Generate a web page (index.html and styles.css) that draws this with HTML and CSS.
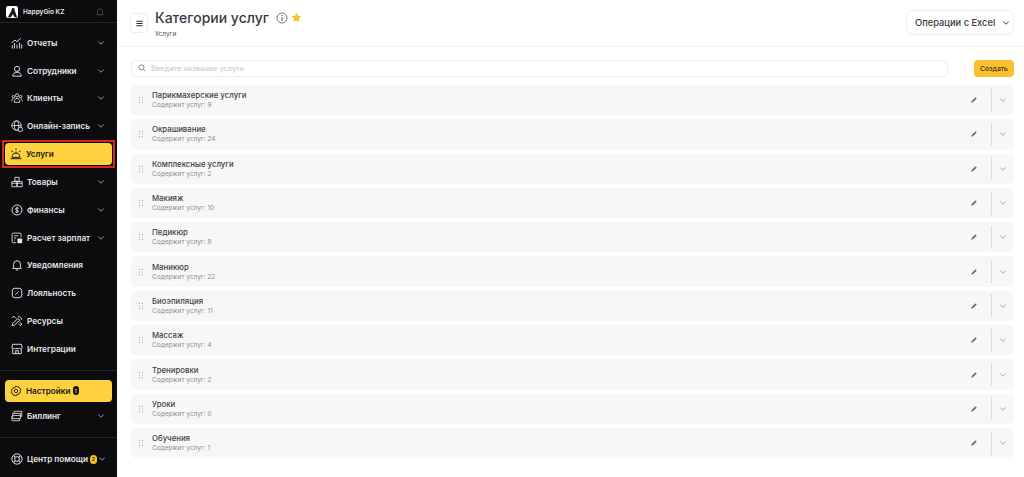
FILE: index.html
```html
<!DOCTYPE html>
<html lang="ru">
<head>
<meta charset="utf-8">
<title>Категории услуг</title>
<link rel="stylesheet" href="styles.css">
</head>
<body>
<svg class="defs" width="0" height="0" aria-hidden="true">
  <symbol id="chev" viewBox="0 0 12 12"><path d="M3 4.5 6 7.5 9 4.5" fill="none" stroke="currentColor" stroke-width="1.2" stroke-linecap="round" stroke-linejoin="round"/></symbol>
  <symbol id="pen" viewBox="0 0 12 12"><path d="M2 10 2.6 7.6 7.6 2.6a1 1 0 0 1 1.5 0l.3.3a1 1 0 0 1 0 1.5L4.4 9.4Z" fill="currentColor"/></symbol>
  <symbol id="grip" viewBox="0 0 8 10"><g fill="currentColor"><circle cx="2" cy="1.5" r=".8"/><circle cx="6" cy="1.5" r=".8"/><circle cx="2" cy="5" r=".8"/><circle cx="6" cy="5" r=".8"/><circle cx="2" cy="8.5" r=".8"/><circle cx="6" cy="8.5" r=".8"/></g></symbol>
</svg>
<div class="app">
  <aside class="sidebar">
    <div class="brand">
      <span class="logo"><svg viewBox="0 0 14 14" width="11" height="11"><path d="M1 13 5.5 5 6.5 1.5 9 1l1 4 3 8H9.5L7.5 9 5 13Z" fill="#15151a"/></svg></span>
      <span class="brand-name">HappyGio KZ</span>
      <svg class="bell-top" viewBox="0 0 12 12" width="10" height="10"><path d="M3 8.5V5.2a3 3 0 0 1 6 0v3.3l1 .7H2ZM5 10.4h2" fill="none" stroke="currentColor" stroke-width="1"/></svg>
    </div>
    <nav class="nav nav-main">
      <a class="item"><svg class="ico" viewBox="0 0 14 14"><path d="M1.5 13V10M4 13V7.5M7 13V9.5M10 13V7M12.5 13V9M1.5 6.5 4.5 3.5 7 5.5 11 1.8" fill="none" stroke="currentColor" stroke-width="1.1" stroke-linecap="round"/></svg><span class="label">Отчеты</span><svg class="chev"><use href="#chev"/></svg></a>
      <a class="item"><svg class="ico" viewBox="0 0 14 14"><circle cx="7" cy="4.5" r="3" fill="none" stroke="currentColor" stroke-width="1.1"/><path d="M2 13c.3-3 2-4.5 5-4.5s4.700 1.500 5 4.500Z" fill="none" stroke="currentColor" stroke-width="1.1"/></svg><span class="label">Сотрудники</span><svg class="chev"><use href="#chev"/></svg></a>
      <a class="item"><svg class="ico" viewBox="0 0 14 14"><g fill="none" stroke="currentColor" stroke-width="1"><circle cx="7" cy="4" r="1.900"/><circle cx="2.800" cy="5.500" r="1.400"/><circle cx="11.200" cy="5.500" r="1.400"/><path d="M3.800 12c0-3 1.200-4.500 3.200-4.500s3.200 1.500 3.200 4.500ZM.8 11c0-2 .7-3 2.200-3M13.200 11c0-2-.7-3-2.200-3"/></g></svg><span class="label">Клиенты</span><svg class="chev"><use href="#chev"/></svg></a>
      <a class="item"><svg class="ico" viewBox="0 0 14 14"><g fill="none" stroke="currentColor" stroke-width="1"><circle cx="6.500" cy="6.500" r="5.500"/><ellipse cx="6.500" cy="6.500" rx="2.500" ry="5.500"/><path d="M1 6.500h11"/></g><circle cx="11" cy="11" r="2.600" fill="#0c0c0f" stroke="currentColor"/></svg><span class="label">Онлайн-запись</span><svg class="chev"><use href="#chev"/></svg></a>
      <div class="focus"><a class="item active"><svg class="ico" viewBox="0 0 14 14"><path d="M2.500 10.500a4.500 4.500 0 0 1 9 0ZM1 12.500h12M7 6V4.500M2 3.500l1.200 1M12 3.500l-1.200 1M7 1v1" fill="none" stroke="currentColor" stroke-width="1.100" stroke-linecap="round"/></svg><span class="label">Услуги</span></a></div>
      <a class="item"><svg class="ico" viewBox="0 0 14 14"><path d="M4.500 1.500h5v4.500h-5ZM1 6.500h6v6H1ZM7 6.500h6v6H7ZM1 8.500h12" fill="none" stroke="currentColor" stroke-width="1"/></svg><span class="label">Товары</span><svg class="chev"><use href="#chev"/></svg></a>
      <a class="item"><svg class="ico" viewBox="0 0 14 14"><circle cx="7" cy="7" r="5.800" fill="none" stroke="currentColor" stroke-width="1.100"/><path d="M8.800 5.200C8.300 4.300 5.200 4.200 5.200 5.800S8.900 7.200 8.900 8.600 5.700 9.900 5 9M7 3.500v7" fill="none" stroke="currentColor"/></svg><span class="label">Финансы</span><svg class="chev"><use href="#chev"/></svg></a>
      <a class="item"><svg class="ico" viewBox="0 0 14 14"><path d="M6 12.500H2.500a1.200 1.200 0 0 1-1.200-1.200V2.500a1.200 1.200 0 0 1 1.200-1.200h8a1.200 1.200 0 0 1 1.200 1.200V6M3.500 4.500h5M3.500 7h2.500M3.500 9.500h1" fill="none" stroke="currentColor" stroke-width="1"/><rect x="7.500" y="7.500" width="5.500" height="5.500" rx="1" fill="currentColor"/></svg><span class="label">Расчет зарплат</span><svg class="chev"><use href="#chev"/></svg></a>
      <a class="item"><svg class="ico" viewBox="0 0 14 14"><path d="M3 10V6a4 4 0 0 1 8 0v4l1 1H2ZM5.500 12.800h3" fill="none" stroke="currentColor" stroke-width="1.100" stroke-linejoin="round"/></svg><span class="label">Уведомления</span></a>
      <a class="item"><svg class="ico" viewBox="0 0 14 14"><rect x="1.500" y="1.500" width="11" height="11" rx="3" fill="none" stroke="currentColor" stroke-width="1.100"/><path d="M5 9l4-4M5 5h.3M8.800 9h.3" fill="none" stroke="currentColor"/></svg><span class="label">Лояльность</span></a>
      <a class="item"><svg class="ico" viewBox="0 0 14 14"><path d="M1.500 12.500 2 10l6-6 2 2-6 6ZM8 2.500l1.500-1 3 3-1 1.500M1.500 3l2-1.500 2.500 2.500M10 8l2.500 2.500-1.500 2-2.500-2.500" fill="none" stroke="currentColor" stroke-width="1.100"/></svg><span class="label">Ресурсы</span></a>
      <a class="item"><svg class="ico" viewBox="0 0 14 14"><path d="M2 1.500h10l1 4a1.700 1.700 0 0 1-3 .6 2 2 0 0 1-3 0 2 2 0 0 1-3 0 1.700 1.700 0 0 1-3-.6ZM2 7v5.500h10V7M5.500 12.500V9h3v3.500" fill="none" stroke="currentColor" stroke-width="1.100"/></svg><span class="label">Интеграции</span></a>
    </nav>
    <nav class="nav nav-settings">
      <a class="item active"><svg class="ico" viewBox="0 0 14 14"><path d="M7 1l1.300 1.300 1.900-.3.600 1.800 1.700.9-.6 1.800.6 1.800-1.700.9-.6 1.800-1.900-.3L7 13l-1.300-1.300-1.900.3-.6-1.800-1.700-.9.600-1.800-.6-1.800 1.700-.9.600-1.800 1.900.3Z" fill="none" stroke="currentColor" stroke-width="1"/><circle cx="7" cy="7" r="2" fill="none" stroke="currentColor"/></svg><span class="label">Настройки</span><span class="badge dark">1</span></a>
      <a class="item"><svg class="ico" viewBox="0 0 14 14"><path d="M3.500 4V2.500a1 1 0 0 1 1-1h8v6H11M2 4h9v6H2ZM2 6.500h9M1 7v4.500a1 1 0 0 0 1 1h8V10" fill="none" stroke="currentColor" stroke-width="1"/></svg><span class="label">Биллинг</span><svg class="chev"><use href="#chev"/></svg></a>
    </nav>
    <nav class="nav nav-help">
      <a class="item"><svg class="ico" viewBox="0 0 14 14"><circle cx="7" cy="7" r="6" fill="none" stroke="currentColor" stroke-width="1.100"/><circle cx="7" cy="7" r="2.700" fill="none" stroke="currentColor" stroke-width="1.100"/><path d="M3 3l2 2M11 3 9 5M3 11l2-2M11 11 9 9" stroke="currentColor" stroke-width="1.300"/></svg><span class="label">Центр помощи</span><span class="badge gold">2</span><svg class="chev"><use href="#chev"/></svg></a>
    </nav>
  </aside>
  <main class="main">
    <header class="header">
      <button class="menu-btn" aria-label="Меню"><svg viewBox="0 0 10 10" width="9" height="9"><path d="M1.500 2.500h7M1.500 5h7M1.500 7.500h7" stroke="#2c2c30" stroke-width="1.200"/></svg></button>
      <div class="titles">
        <div class="title-row">
          <h1 class="title">Категории услуг</h1>
          <svg class="info" viewBox="0 0 12 12" width="12" height="12"><circle cx="6" cy="6" r="5" fill="none" stroke="#77777c"/><path d="M6 5.200V9M6 3v1.100" stroke="#55555a" stroke-width="1.100"/></svg>
          <svg class="star" viewBox="0 0 12 12" width="11" height="11"><path d="M6 .8 7.600 4.200l3.700.5-2.700 2.600.7 3.700L6 9.200 2.700 11l.7-3.700L.7 4.700l3.700-.5Z" fill="#f9c22d"/></svg>
        </div>
        <div class="crumb">Услуги</div>
      </div>
      <button class="excel">Операции с Excel<svg class="chev-dark"><use href="#chev"/></svg></button>
    </header>
    <section class="content">
      <div class="toolbar">
        <div class="search">
          <svg viewBox="0 0 10 10" width="8" height="8"><circle cx="4.300" cy="4.300" r="3.200" fill="none" stroke="#77777c" stroke-width="1.100"/><path d="M6.800 6.800 9 9" stroke="#77777c" stroke-width="1.100"/></svg>
          <span class="placeholder">Введите название услуги</span>
        </div>
        <button class="create">Создать</button>
      </div>
      <ul class="rows">
        <li class="row"><svg class="grip"><use href="#grip"/></svg><div class="row-text"><div class="row-name">Парикмахерские услуги</div><div class="row-sub">Содержит услуг: 9</div></div><svg class="pen"><use href="#pen"/></svg><span class="sep"></span><svg class="row-chev"><use href="#chev"/></svg></li>
        <li class="row"><svg class="grip"><use href="#grip"/></svg><div class="row-text"><div class="row-name">Окрашивание</div><div class="row-sub">Содержит услуг: 24</div></div><svg class="pen"><use href="#pen"/></svg><span class="sep"></span><svg class="row-chev"><use href="#chev"/></svg></li>
        <li class="row"><svg class="grip"><use href="#grip"/></svg><div class="row-text"><div class="row-name">Комплексные услуги</div><div class="row-sub">Содержит услуг: 2</div></div><svg class="pen"><use href="#pen"/></svg><span class="sep"></span><svg class="row-chev"><use href="#chev"/></svg></li>
        <li class="row"><svg class="grip"><use href="#grip"/></svg><div class="row-text"><div class="row-name">Макияж</div><div class="row-sub">Содержит услуг: 10</div></div><svg class="pen"><use href="#pen"/></svg><span class="sep"></span><svg class="row-chev"><use href="#chev"/></svg></li>
        <li class="row"><svg class="grip"><use href="#grip"/></svg><div class="row-text"><div class="row-name">Педикюр</div><div class="row-sub">Содержит услуг: 8</div></div><svg class="pen"><use href="#pen"/></svg><span class="sep"></span><svg class="row-chev"><use href="#chev"/></svg></li>
        <li class="row"><svg class="grip"><use href="#grip"/></svg><div class="row-text"><div class="row-name">Маникюр</div><div class="row-sub">Содержит услуг: 22</div></div><svg class="pen"><use href="#pen"/></svg><span class="sep"></span><svg class="row-chev"><use href="#chev"/></svg></li>
        <li class="row"><svg class="grip"><use href="#grip"/></svg><div class="row-text"><div class="row-name">Биоэпиляция</div><div class="row-sub">Содержит услуг: 11</div></div><svg class="pen"><use href="#pen"/></svg><span class="sep"></span><svg class="row-chev"><use href="#chev"/></svg></li>
        <li class="row"><svg class="grip"><use href="#grip"/></svg><div class="row-text"><div class="row-name">Массаж</div><div class="row-sub">Содержит услуг: 4</div></div><svg class="pen"><use href="#pen"/></svg><span class="sep"></span><svg class="row-chev"><use href="#chev"/></svg></li>
        <li class="row"><svg class="grip"><use href="#grip"/></svg><div class="row-text"><div class="row-name">Тренировки</div><div class="row-sub">Содержит услуг: 2</div></div><svg class="pen"><use href="#pen"/></svg><span class="sep"></span><svg class="row-chev"><use href="#chev"/></svg></li>
        <li class="row"><svg class="grip"><use href="#grip"/></svg><div class="row-text"><div class="row-name">Уроки</div><div class="row-sub">Содержит услуг: 0</div></div><svg class="pen"><use href="#pen"/></svg><span class="sep"></span><svg class="row-chev"><use href="#chev"/></svg></li>
        <li class="row"><svg class="grip"><use href="#grip"/></svg><div class="row-text"><div class="row-name">Обучения</div><div class="row-sub">Содержит услуг: 1</div></div><svg class="pen"><use href="#pen"/></svg><span class="sep"></span><svg class="row-chev"><use href="#chev"/></svg></li>
      </ul>
    </section>
  </main>
</div>
</body>
</html>
```
FILE: styles.css
```css
* { box-sizing: border-box; }
html, body { margin: 0; height: 100%; }
body { font-family: Inter, "Liberation Sans", sans-serif; background: #fff; overflow: hidden; }
.defs { position: absolute; }
.app { display: flex; height: 477px; }

.sidebar { width: 117px; flex: none; background: #0c0c0f; color: #e6e6e8; display: flex; flex-direction: column; }
.brand { height: 23px; display: flex; align-items: center; padding: 0 12px 0 6px; border-bottom: 1px solid #26262a; gap: 5px; }
.logo { width: 12px; height: 12px; background: #fff; border-radius: 2px; display: flex; align-items: center; justify-content: center; margin-top: 2px; }
.brand-name { font-size: 6.500px; font-weight: 600; flex: 1; margin-top: 1px; }
.bell-top { color: #46464a; margin-top: 1px; }

.nav { display: flex; flex-direction: column; padding: 0 5px; }
.nav-main { padding-top: 6px; padding-bottom: 7px; border-bottom: 1px solid #26262a; }
.nav-settings { padding-top: 9px; padding-bottom: 7px; border-bottom: 1px solid #26262a; }
.nav-help { padding-top: 8px; }

.item { height: 27.800px; display: flex; align-items: center; font-size: 8.200px; font-weight: 600; padding-left: 6px; padding-right: 6px; flex: none; }
.ico { width: 12px; height: 12px; flex: none; margin-right: 4px; color: #e6e6e8; }
.label { white-space: nowrap; }
.chev { width: 10px; height: 10px; margin-left: auto; color: #9a9a9e; flex: none; }
.focus { height: 28px; margin: 0 -3px; border: 2px solid #d5261c; padding: 1px; display: flex; }
.item.active { background: #fdd23e; color: #17171a; border-radius: 4px; height: 22px; flex: 1; padding-left: 5px; }
.item.active .ico { color: #17171a; }
.nav-settings .item.active { flex: none; }
.badge { font-size: 5px; height: 9px; min-width: 6px; padding: 0 1px; border-radius: 3px; display: flex; align-items: center; justify-content: center; margin-left: 2px; }
.badge.dark { background: #17171a; color: #fdd23e; }
.badge.gold { background: #fdbf25; color: #17171a; min-width: 7px; border-radius: 4px; }

.main { flex: 1; min-width: 0; display: flex; flex-direction: column; }
.header { height: 47px; display: flex; align-items: flex-start; padding: 10px 10px 0 13px; border-bottom: 1px solid #f3f3f4; flex: none; }
.menu-btn { width: 18px; height: 20px; margin-top: 3px; border: 1px solid #ececee; border-radius: 4px; background: #fff; padding: 0; display: flex; align-items: center; justify-content: center; }
.titles { margin-left: 7px; display: flex; flex-direction: column; }
.title-row { display: flex; align-items: center; }
.title { margin: 0; font-size: 14px; line-height: 16px; font-weight: 500; color: #3a3a3e; }
.info { margin-left: 7px; }
.star { margin-left: 3px; margin-top: -2px; }
.crumb { font-size: 6.500px; color: #55555a; margin-top: 4px; line-height: 8px; }
.excel { margin-left: auto; width: 108px; height: 25px; background: #fff; border: 1px solid #ececee; border-radius: 6px; font: 500 9.300px Inter, "Liberation Sans", sans-serif; color: #3a3a3e; display: flex; align-items: center; padding: 0 0 0 8px; white-space: nowrap; }
.chev-dark { width: 10px; height: 10px; margin-left: 6px; color: #3a3a3e; flex: none; }

.content { padding: 12px 10px 0 14px; display: flex; flex-direction: column; }
.toolbar { display: flex; align-items: center; height: 18px; }
.search { width: 817px; height: 17px; border: 1px solid #ececee; border-radius: 4px; display: flex; align-items: center; padding-left: 6px; gap: 5px; }
.placeholder { font-size: 7.300px; color: #c4c4c8; letter-spacing: .1px; }
.create { margin-left: auto; width: 40px; height: 17px; border: 0; border-radius: 4px; background: #fbc02d; font: 500 6.800px Inter, "Liberation Sans", sans-serif; color: #3c3218; padding: 0; }

.rows { list-style: none; margin: 8px 0 0; padding: 0; display: flex; flex-direction: column; gap: 4px; }
.row { height: 30.300px; background: #f7f7f7; border-radius: 5px; display: flex; align-items: center; padding-left: 7px; }
.grip { width: 6px; height: 8px; color: #a5a5a9; flex: none; }
.row-text { margin-left: 8px; flex: 1; }
.row-name { font-size: 7.800px; font-weight: 500; color: #3f3f43; line-height: 10px; }
.row-sub { font-size: 6.500px; color: #8e8e92; line-height: 9px; margin-top: 1px; }
.pen { width: 8px; height: 8px; color: #68686c; flex: none; }
.sep { width: 1px; height: 23px; background: #dcdcde; margin-left: 13px; flex: none; }
.row-chev { width: 10px; height: 10px; color: #a9a9ad; margin: 0 6px 0 6px; flex: none; }
```
